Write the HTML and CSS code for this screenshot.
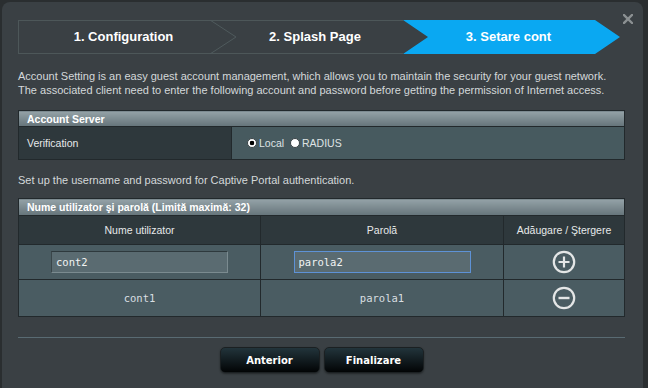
FILE: index.html
```html
<!DOCTYPE html>
<html lang="ro">
<head>
  <meta charset="UTF-8">
  <title>Captive Portal - Setare cont</title>
  <link rel="stylesheet" href="styles.css">
</head>
<body>
  <div class="dialog">
    <svg class="close" viewBox="0 0 10 10" width="10" height="10">
      <path d="M1 1 L9 9 M9 1 L1 9" stroke="#8b9092" stroke-width="2.4" stroke-linecap="square"/>
    </svg>

    <ol class="steps">
      <li class="step first">1. Configuration</li>
      <li class="step second">
        <svg class="chevron" viewBox="0 0 27 34" width="27" height="34">
          <polyline points="0,0 26,17 0,34" fill="none" stroke="#4f5a5d" stroke-width="1"/>
        </svg>
        2. Splash Page
      </li>
      <li class="step current">3. Setare cont</li>
    </ol>

    <p class="intro">
      Account Setting is an easy guest account management, which allows you to maintain the security for your guest network.<br>
      The associated client need to enter the following account and password before getting the permission of Internet access.
    </p>

    <table class="form-table">
      <thead>
        <tr><td colspan="2">Account Server</td></tr>
      </thead>
      <tbody>
        <tr>
          <th>Verification</th>
          <td>
            <label class="radio"><input type="radio" name="auth" checked>Local</label>
            <label class="radio"><input type="radio" name="auth">RADIUS</label>
          </td>
        </tr>
      </tbody>
    </table>

    <p class="hint">Set up the username and password for Captive Portal authentication.</p>

    <table class="list-table">
      <thead>
        <tr class="caption"><td colspan="3">Nume utilizator şi parolă (Limită maximă: 32)</td></tr>
        <tr class="cols">
          <th class="c-user">Nume utilizator</th>
          <th class="c-pass">Parolă</th>
          <th class="c-act">Adăugare / Ştergere</th>
        </tr>
      </thead>
      <tbody>
        <tr class="add-row">
          <td><input type="text" class="field" value="cont2"></td>
          <td><input type="text" class="field focus" value="parola2"></td>
          <td>
            <button class="icon-btn" title="Adăugare">
              <svg viewBox="0 0 24 24" width="24" height="24">
                <circle cx="12" cy="12" r="10.2" fill="none" stroke="#e4e6e6" stroke-width="2.2"/>
                <path d="M12 6.5 V17.5 M6.5 12 H17.5" stroke="#e4e6e6" stroke-width="2.2"/>
              </svg>
            </button>
          </td>
        </tr>
        <tr class="item-row">
          <td>cont1</td>
          <td>parola1</td>
          <td>
            <button class="icon-btn" title="Ştergere">
              <svg viewBox="0 0 24 24" width="24" height="24">
                <circle cx="12" cy="12" r="10.2" fill="none" stroke="#e4e6e6" stroke-width="2.2"/>
                <path d="M6.5 12 H17.5" stroke="#e4e6e6" stroke-width="2.4"/>
              </svg>
            </button>
          </td>
        </tr>
      </tbody>
    </table>

    <div class="actions">
      <button class="btn">Anterior</button>
      <button class="btn">Finalizare</button>
    </div>
  </div>
</body>
</html>
```

FILE: styles.css
```css
body {
  margin: 0;
  background: #2a2e30;
  font-family: 'Liberation Sans', Arial, sans-serif;
  color: #d6dadc;
  overflow: hidden;
}

.dialog {
  position: relative;
  box-sizing: border-box;
  width: 641px;
  height: 400px;
  margin: 2px 0 0 2px;
  padding: 18px 18px 0 16px;
  background: #3a4044;
  border-radius: 8px 8px 0 0;
}

.close {
  position: absolute;
  top: 12px;
  right: 10px;
}

/* stepper */
.steps {
  display: flex;
  margin: 0;
  padding: 0;
  list-style: none;
  height: 34px;
}

.step {
  position: relative;
  box-sizing: border-box;
  height: 34px;
  line-height: 32px;
  font-size: 13px;
  font-weight: bold;
  color: #fff;
  text-align: center;
}

.step.first {
  width: 192px;
  padding-left: 18px;
  border: 1px solid #4d5759;
  border-right: none;
}

.step.second {
  width: 193px;
  padding-left: 17px;
  border-top: 1px solid #4d5759;
  border-bottom: 1px solid #4d5759;
}

.chevron {
  position: absolute;
  left: 0;
  top: -1px;
}

.step.current {
  width: 217px;
  padding-right: 6px;
  line-height: 34px;
  background: #0aa8f2;
  clip-path: polygon(0 0, calc(100% - 25px) 0, 100% 50%, calc(100% - 25px) 100%, 0 100%, 25px 50%);
}

/* texts */
.intro,
.hint {
  margin: 0;
  font-size: 11px;
  line-height: 14px;
  color: #d4d8da;
}

.intro {
  margin-top: 15px;
}

.hint {
  margin: 13px 0 11px;
}

/* tables */
table {
  width: 607px;
  border-collapse: collapse;
  font-size: 10.5px;
  color: #e6e9ea;
}

thead td {
  height: 15px;
  padding: 0 8px;
  font-weight: bold;
  color: #fff;
  background: linear-gradient(#94a2a7, #65747a);
  border: 1px solid #22292c;
}

.form-table {
  margin-top: 13px;
}

.form-table th {
  width: 196px;
  height: 32px;
  padding: 0 8px;
  text-align: left;
  font-weight: normal;
  background: #2e383c;
  border: 1px solid #22292c;
}

.form-table tbody td {
  padding: 0 0 0 15px;
  background: #475a5f;
  border: 1px solid #22292c;
}

.radio {
  display: inline-flex;
  align-items: center;
  gap: 2px;
  margin-right: 3px;
  color: #dfe3e4;
}

.radio input {
  appearance: none;
  width: 10px;
  height: 10px;
  margin: 0;
  border-radius: 50%;
  border: 1px solid #3a4346;
  background: #fff;
}

.radio input:checked {
  background: radial-gradient(circle, #000 0 2px, #fff 2.6px);
}

.list-table .caption td {
  height: 16px;
}

.list-table .cols th {
  height: 28px;
  padding: 0;
  font-weight: normal;
  background: #2e383c;
  border: 1px solid #22292c;
}

.c-user { width: 241px; }
.c-pass { width: 242px; }

.list-table tbody td {
  padding: 0;
  text-align: center;
  background: #4a5c62;
  border: 1px solid #22292c;
  font-family: 'DejaVu Sans Mono', monospace;
  font-size: 10.5px;
  color: #d9dfe1;
}

.add-row td {
  height: 34px;
  border-bottom-width: 2px;
}

.item-row td {
  height: 36px;
}

.field {
  box-sizing: border-box;
  width: 177px;
  height: 22px;
  padding: 0 4px;
  background: #5a6b71;
  border: 1px solid #7b8b90;
  border-top-color: #2e393d;
  border-left-color: #3a464a;
  font-family: 'DejaVu Sans Mono', monospace;
  font-size: 10.5px;
  color: #f2f4f4;
  outline: none;
}

.field.focus {
  border: 1px solid #5e92d6;
}

.icon-btn {
  display: block;
  margin: 0 auto;
  padding: 0;
  width: 24px;
  height: 24px;
  border: none;
  background: none;
  cursor: pointer;
}

.icon-btn svg {
  display: block;
}

/* footer */
.actions {
  display: flex;
  justify-content: center;
  gap: 4px;
  margin-top: 20px;
  padding-top: 9px;
  border-top: 1px solid #596b73;
}

.btn {
  width: 100px;
  height: 26px;
  border-radius: 5px;
  border: 1px solid #1b2022;
  background: linear-gradient(#22343b, #020405);
  box-shadow: 0 1px 2px rgba(0, 0, 0, 0.4);
  font-family: 'DejaVu Sans', Verdana, sans-serif;
  font-size: 10px;
  font-weight: bold;
  color: #fff;
  cursor: pointer;
}
```
